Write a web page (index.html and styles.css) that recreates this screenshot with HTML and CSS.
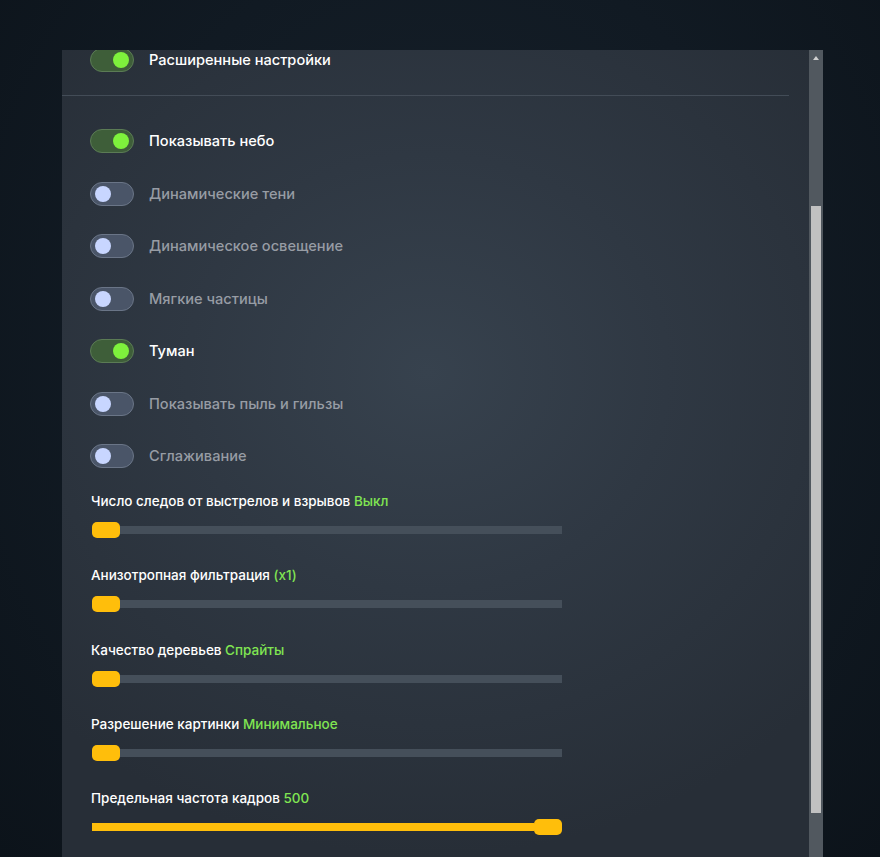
FILE: index.html
```html
<!DOCTYPE html>
<html lang="ru">
<head>
<meta charset="utf-8">
<link rel="stylesheet" href="styles.css">
</head>
<body>
<div class="panel">
  <div class="content">
    <div class="row first">
      <span class="toggle on"><span class="knob"></span></span>
      <span class="label">Расширенные настройки</span>
    </div>
    <div class="divider"></div>
    <div class="toggle-list">
      <div class="row"><span class="toggle on"><span class="knob"></span></span><span class="label">Показывать небо</span></div>
      <div class="row"><span class="toggle"><span class="knob"></span></span><span class="label off">Динамические тени</span></div>
      <div class="row"><span class="toggle"><span class="knob"></span></span><span class="label off">Динамическое освещение</span></div>
      <div class="row"><span class="toggle"><span class="knob"></span></span><span class="label off">Мягкие частицы</span></div>
      <div class="row"><span class="toggle on"><span class="knob"></span></span><span class="label">Туман</span></div>
      <div class="row"><span class="toggle"><span class="knob"></span></span><span class="label off">Показывать пыль и гильзы</span></div>
      <div class="row"><span class="toggle"><span class="knob"></span></span><span class="label off">Сглаживание</span></div>
    </div>
    <div class="sliders">
      <div class="slider">
        <div class="s-label">Число следов от выстрелов и взрывов <span class="val">Выкл</span></div>
        <div class="track"><span class="fill" style="width:0%"></span><span class="thumb"></span></div>
      </div>
      <div class="slider">
        <div class="s-label">Анизотропная фильтрация <span class="val">(x1)</span></div>
        <div class="track"><span class="fill" style="width:0%"></span><span class="thumb"></span></div>
      </div>
      <div class="slider">
        <div class="s-label">Качество деревьев <span class="val">Спрайты</span></div>
        <div class="track"><span class="fill" style="width:0%"></span><span class="thumb"></span></div>
      </div>
      <div class="slider">
        <div class="s-label">Разрешение картинки <span class="val">Минимальное</span></div>
        <div class="track"><span class="fill" style="width:0%"></span><span class="thumb"></span></div>
      </div>
      <div class="slider">
        <div class="s-label">Предельная частота кадров <span class="val">500</span></div>
        <div class="track"><span class="fill" style="width:calc(100% - 28px)"></span><span class="thumb"></span></div>
      </div>
    </div>
  </div>
  <div class="scrollbar">
    <div class="arrow"></div>
    <div class="sb-thumb"></div>
  </div>
</div>
</body>
</html>
```
FILE: styles.css
```css
html, body {
  margin: 0;
  padding: 0;
  height: 857px;
  overflow: hidden;
}
body {
  background: radial-gradient(ellipse at 50% 40%, #17212b 0%, #111a23 55%, #0c131a 100%);
  font-family: Inter, "Noto Sans", sans-serif;
  font-size: 14px;
  font-weight: 500;
  color: #fff;
}
.panel {
  margin: 50px 0 0 62px;
  width: 761px;
  height: 807px;
  display: flex;
  background: radial-gradient(ellipse 70% 60% at 48% 40%, #37424e 0%, #2f3843 45%, #272e37 100%);
}
.content {
  width: 747px;
  overflow: hidden;
  padding-left: 28px;
  box-sizing: border-box;
}
.row {
  display: flex;
  align-items: center;
  gap: 15px;
  height: 24px;
}
.row.first {
  margin-top: -2px;
}
.divider {
  height: 1px;
  background: #434c57;
  margin: 23px 20px 33px -28px;
}
.toggle-list {
  display: flex;
  flex-direction: column;
  gap: 28.5px;
}
.toggle {
  width: 44px;
  height: 24px;
  box-sizing: border-box;
  border-radius: 12px;
  border: 1px solid #6a7587;
  background: #4a5568;
  display: flex;
  align-items: center;
  padding: 0 4px;
  flex-shrink: 0;
}
.toggle .knob {
  width: 16px;
  height: 16px;
  border-radius: 50%;
  background: #c8d6ff;
}
.toggle.on {
  background: #3e5e39;
  border-color: #5b7b55;
  justify-content: flex-end;
}
.toggle.on .knob {
  background: #7ef23c;
}
.label {
  line-height: 20px;
  color: #ffffff;
  font-size: 14.6px;
  font-weight: 500;
}
.label.off {
  color: #979ca4;
}
.sliders {
  margin-top: 22px;
}
.slider {
  height: 74.25px;
  width: 472px;
}
.s-label {
  line-height: 20px;
  margin-left: 1px;
  font-size: 13.5px;
  font-weight: 500;
  padding-top: 1px;
}
.val {
  color: #80e552;
}
.track {
  margin: 11px 0 0 2px;
  height: 16px;
  position: relative;
  display: flex;
  align-items: center;
}
.track::before {
  content: "";
  position: absolute;
  left: 0;
  right: 0;
  top: 4px;
  height: 8px;
  background: #454f5a;
}
.fill {
  position: relative;
  height: 8px;
  background: #ffbe0b;
  flex-shrink: 0;
}
.thumb {
  position: relative;
  width: 28px;
  height: 16px;
  border-radius: 5px;
  background: #ffbe0b;
  flex-shrink: 0;
}
.scrollbar {
  width: 14px;
  background: #51585f;
  display: flex;
  flex-direction: column;
  align-items: center;
}
.arrow {
  margin-top: 6px;
  width: 0;
  height: 0;
  border-left: 3.5px solid transparent;
  border-right: 3.5px solid transparent;
  border-bottom: 4px solid #d0d0d0;
}
.sb-thumb {
  margin-top: 146px;
  width: 10px;
  height: 607px;
  background: #c1c1c1;
}
```
